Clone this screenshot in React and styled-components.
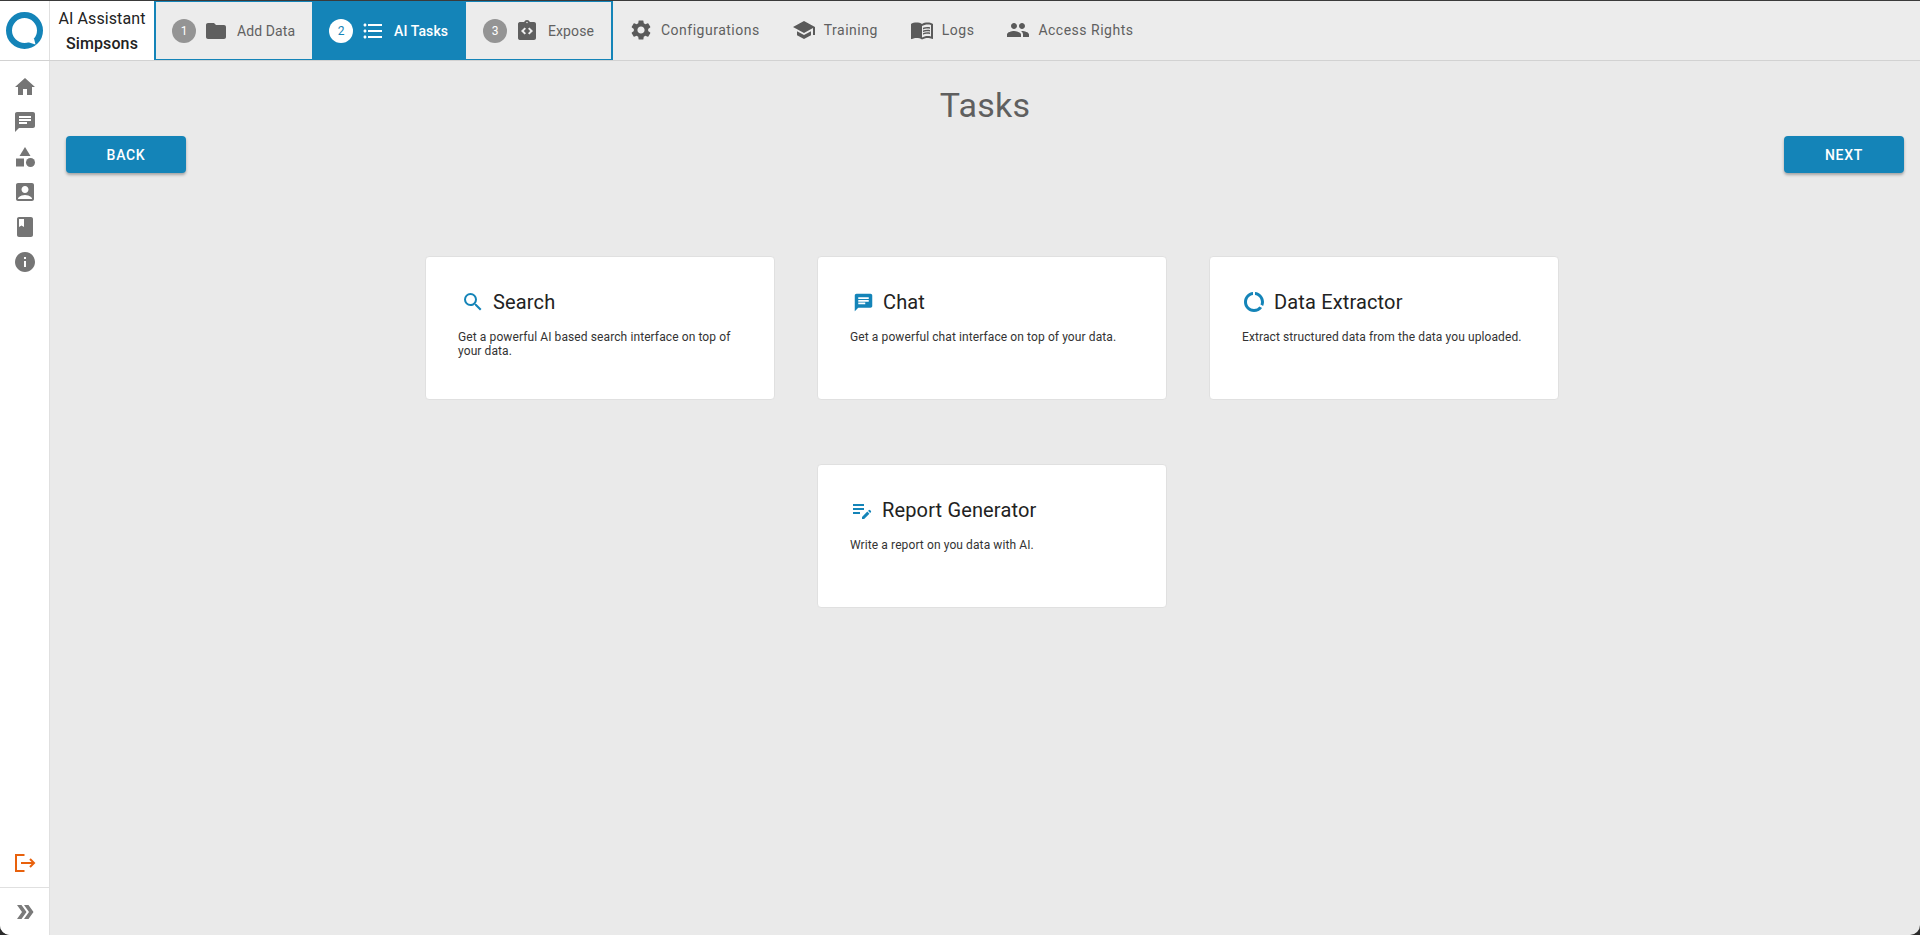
import React from 'react';
import styled, { createGlobalStyle } from 'styled-components';
import {
  MdHome,
  MdChat,
  MdCategory,
  MdAccountBox,
  MdBook,
  MdInfo,
  MdDoubleArrow,
  MdFolder,
  MdFormatListBulleted,
  MdIntegrationInstructions,
  MdSettings,
  MdSchool,
  MdMenuBook,
  MdPeople,
  MdSearch,
  MdDataUsage,
  MdEditNote,
} from 'react-icons/md';

const BLUE = '#1484b8';

const GlobalStyle = createGlobalStyle`
  html, body {
    margin: 0;
    padding: 0;
    height: 100%;
    overflow: hidden;
    background: #2b2b2b;
  }
  body, button {
    font-family: Roboto, "Liberation Sans", sans-serif;
  }
  * {
    box-sizing: border-box;
  }
`;

const Page = styled.div`
  width: 1920px;
  height: 935px;
  overflow: hidden;
  display: grid;
  grid-template-rows: 60px 1fr;
  background: #eaeaea;
  border-top: 1px solid #3a3a3a;
  border-radius: 0 0 10px 10px;
`;

const Header = styled.header`
  display: flex;
  align-items: stretch;
  background: #ececec;
  border-bottom: 1px solid #d2d2d2;
`;

const LogoCell = styled.div`
  width: 50px;
  display: flex;
  align-items: center;
  justify-content: center;
  background: #fff;
  border-right: 1px solid #e0e0e0;
`;

const NameCell = styled.div`
  width: 104px;
  display: flex;
  flex-direction: column;
  align-items: center;
  justify-content: center;
  gap: 1px;
  padding-top: 1px;
  background: #fff;
  color: #222;
  font-size: 16px;
  line-height: 24px;
  letter-spacing: 0.1px;
`;

const ProjectName = styled.strong`
  font-weight: 500;
`;

const Stepper = styled.nav`
  width: 459px;
  display: flex;
  border: 2px solid ${BLUE};
  border-top-width: 1px;
  border-bottom-width: 1px;
`;

const Step = styled.div`
  display: flex;
  align-items: center;
  width: ${({ $width }) => $width}px;
  padding-left: ${({ $pad }) => $pad}px;
  background: ${({ $active }) => ($active ? BLUE : 'transparent')};
  color: ${({ $active }) => ($active ? '#fff' : '#616161')};
  font-size: 14px;
  font-weight: ${({ $active }) => ($active ? 500 : 400)};
  letter-spacing: 0.1px;

  svg {
    flex: none;
    font-size: 24px;
    margin: 0 9px 0 8px;
    color: ${({ $active }) => ($active ? '#fff' : '#5f5f5f')};
  }
`;

const StepNumber = styled.span`
  width: 24px;
  height: 24px;
  flex: none;
  display: flex;
  align-items: center;
  justify-content: center;
  border-radius: 50%;
  font-size: 12px;
  font-weight: 400;
  letter-spacing: 0;
  background: ${({ $active }) => ($active ? '#fff' : '#949494')};
  color: ${({ $active }) => ($active ? BLUE : '#fff')};
`;

const NavLinks = styled.nav`
  display: flex;
  align-items: center;
  padding-left: 16px;
  padding-bottom: 1px;
  gap: 32px;
`;

const NavLink = styled.a`
  display: flex;
  align-items: center;
  gap: 8px;
  color: #5f5f5f;
  font-size: 14px;
  letter-spacing: 0.5px;

  svg {
    font-size: 24px;
    color: #5a5a5a;
  }
`;

const Body = styled.div`
  display: grid;
  grid-template-columns: 50px 1fr;
  min-height: 0;
`;

const Sidebar = styled.aside`
  display: flex;
  flex-direction: column;
  background: #fff;
  border-right: 1px solid #e0e0e0;
  color: #757575;
`;

const SideMenu = styled.div`
  display: flex;
  flex-direction: column;
  padding-top: 8px;
  flex: 1;
`;

const SideItem = styled.div`
  height: 35px;
  display: flex;
  align-items: center;
  justify-content: center;
  font-size: 24px;
`;

const LogoutRow = styled.div`
  height: 48px;
  display: flex;
  align-items: center;
  justify-content: center;
`;

const ExpandRow = styled.div`
  height: 48px;
  border-top: 1px solid #e0e0e0;
  display: flex;
  align-items: center;
  justify-content: center;
  font-size: 24px;
  color: #7a7a7a;
`;

const Main = styled.main`
  padding: 0 16px;
`;

const Title = styled.h1`
  margin: 0;
  padding-top: 22px;
  text-align: center;
  font-size: 34px;
  line-height: 44px;
  font-weight: 400;
  letter-spacing: 0.25px;
  color: #5f5f5f;
`;

const ActionBar = styled.div`
  display: flex;
  justify-content: space-between;
  margin-top: 9px;
`;

const ActionButton = styled.button`
  width: 120px;
  height: 37px;
  border: 0;
  border-radius: 4px;
  background: ${BLUE};
  color: #fff;
  font-size: 14px;
  font-weight: 500;
  letter-spacing: 0.7px;
  box-shadow: 0 2px 3px rgba(0, 0, 0, 0.3);
`;

const CardGrid = styled.div`
  display: flex;
  flex-wrap: wrap;
  justify-content: center;
  gap: 64px 42px;
  width: 1134px;
  margin: 83px 0 0 359px;
`;

const Card = styled.article`
  width: 350px;
  height: 144px;
  padding: 33px 32px 0;
  background: #fff;
  border: 1px solid #e0e0e0;
  border-radius: 4px;
`;

const CardHeading = styled.div`
  display: flex;
  align-items: center;
  gap: 8px;
  padding-left: 1px;
  height: 24px;
  color: #222;
  font-size: 20px;
  letter-spacing: 0.15px;
`;

const CardIcon = styled.span`
  width: 24px;
  height: 24px;
  flex: none;
  display: flex;
  align-items: center;
  justify-content: center;
  margin-left: ${({ $shift }) => $shift}px;
  font-size: ${({ $size }) => $size}px;
  color: ${BLUE};
`;

const CardText = styled.p`
  margin: 16px 0 0;
  color: #333;
  font-size: 12px;
  line-height: 14px;
  letter-spacing: 0.1px;
`;

// blue ring with the small speech tail cut into it
const Logo = () => (
  <svg width="37" height="37" viewBox="0 0 37 37">
    <circle cx="18.5" cy="18.5" r="15.5" fill="none" stroke={BLUE} strokeWidth="6" />
    <path d="M21.5 30L28 26.5l1.5 6z" fill="#fff" />
  </svg>
);

const LogoutIcon = () => (
  <svg width="24" height="24" viewBox="0 0 24 24" fill="none" stroke="#e8610c" strokeWidth="2">
    <path d="M11.5 4H3v16h8.5" />
    <path d="M8 12h13.5M17 8l4 4-4 4" />
  </svg>
);

const sideItems = [MdHome, MdChat, MdCategory, MdAccountBox, MdBook, MdInfo];

const steps = [
  { n: 1, label: 'Add Data', icon: MdFolder, width: 156, pad: 16 },
  { n: 2, label: 'AI Tasks', icon: MdFormatListBulleted, width: 154, pad: 17, active: true },
  { n: 3, label: 'Expose', icon: MdIntegrationInstructions, width: 145, pad: 17 },
];

const links = [
  { label: 'Configurations', icon: MdSettings },
  { label: 'Training', icon: MdSchool },
  { label: 'Logs', icon: MdMenuBook },
  { label: 'Access Rights', icon: MdPeople },
];

const tasks = [
  { title: 'Search', text: 'Get a powerful AI based search interface on top of your data.', icon: MdSearch, size: 24, shift: 2 },
  { title: 'Chat', text: 'Get a powerful chat interface on top of your data.', icon: MdChat, size: 21, shift: 0 },
  { title: 'Data Extractor', text: 'Extract structured data from the data you uploaded.', icon: MdDataUsage, size: 24, shift: -1 },
  { title: 'Report Generator', text: 'Write a report on you data with AI.', icon: MdEditNote, size: 24, shift: -1 },
];

const App = () => (
  <>
    <GlobalStyle />
    <Page>
      <Header>
        <LogoCell>
          <Logo />
        </LogoCell>
        <NameCell>
          <span>AI Assistant</span>
          <ProjectName>Simpsons</ProjectName>
        </NameCell>
        <Stepper>
          {steps.map(({ n, label, icon: Icon, width, pad, active }) => (
            <Step key={n} $width={width} $pad={pad} $active={active}>
              <StepNumber $active={active}>{n}</StepNumber>
              <Icon />
              {label}
            </Step>
          ))}
        </Stepper>
        <NavLinks>
          {links.map(({ label, icon: Icon }) => (
            <NavLink key={label}>
              <Icon />
              {label}
            </NavLink>
          ))}
        </NavLinks>
      </Header>
      <Body>
        <Sidebar>
          <SideMenu>
            {sideItems.map((Icon, i) => (
              <SideItem key={i}>
                <Icon />
              </SideItem>
            ))}
          </SideMenu>
          <LogoutRow>
            <LogoutIcon />
          </LogoutRow>
          <ExpandRow>
            <MdDoubleArrow />
          </ExpandRow>
        </Sidebar>
        <Main>
          <Title>Tasks</Title>
          <ActionBar>
            <ActionButton>BACK</ActionButton>
            <ActionButton>NEXT</ActionButton>
          </ActionBar>
          <CardGrid>
            {tasks.map(({ title, text, icon: Icon, size, shift }) => (
              <Card key={title}>
                <CardHeading>
                  <CardIcon $size={size} $shift={shift}>
                    <Icon />
                  </CardIcon>
                  {title}
                </CardHeading>
                <CardText>{text}</CardText>
              </Card>
            ))}
          </CardGrid>
        </Main>
      </Body>
    </Page>
  </>
);

export default App;
